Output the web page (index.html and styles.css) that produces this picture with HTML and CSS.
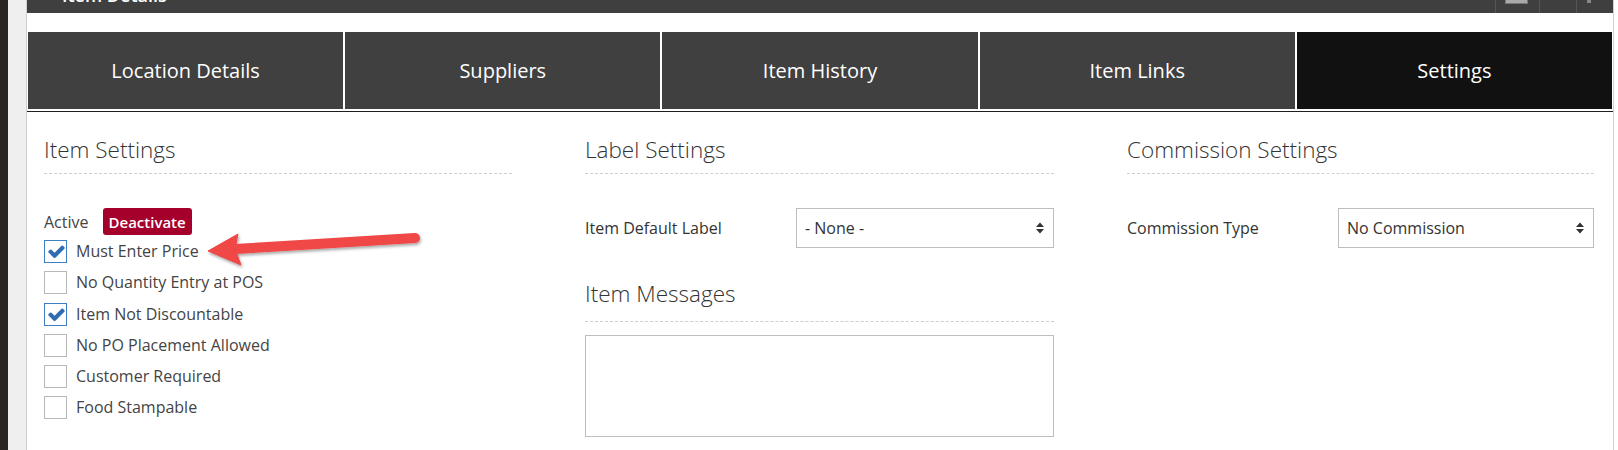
FILE: index.html
```html
<!DOCTYPE html>
<html lang="en">

<head>
    <meta charset="UTF-8">
    <meta name="viewport" content="width=device-width, initial-scale=1.0">
    <title>Item Details</title>
    <link rel="stylesheet" href="styles.css">
</head>

<body>
    <div class="page">
        <div class="edge"></div>
        <div class="gutter"></div>

        <div class="panel">
            <div class="topbar">
                <span class="topbar-title">Item Details</span>
                <div class="topbar-tools">
                    <div class="tool"><span class="tool-box"></span></div>
                    <div class="tool"></div>
                    <div class="tool"><span class="tool-dot"></span></div>
                </div>
            </div>

            <div class="tabs">
                <div class="tab">Location Details</div>
                <div class="tab">Suppliers</div>
                <div class="tab">Item History</div>
                <div class="tab">Item Links</div>
                <div class="tab active">Settings</div>
            </div>

            <div class="settings">
                <section class="col">
                    <h3 class="section-title">Item Settings</h3>
                    <div class="active-row">
                        <span>Active</span>
                        <button class="btn-deactivate">Deactivate</button>
                    </div>
                    <ul class="checks">
                        <li class="check-row">
                            <span class="check checked">
                                <svg viewBox="0 0 1792 1792"><path d="M1671 566q0 40-28 68l-724 724-136 136q-28 28-68 28t-68-28l-136-136-362-362q-28-28-28-68t28-68l136-136q28-28 68-28t68 28l294 295 656-657q28-28 68-28t68 28l136 136q28 28 28 68z" /></svg>
                            </span>
                            Must Enter Price
                        </li>
                        <li class="check-row"><span class="check"></span>No Quantity Entry at POS</li>
                        <li class="check-row">
                            <span class="check checked">
                                <svg viewBox="0 0 1792 1792"><path d="M1671 566q0 40-28 68l-724 724-136 136q-28 28-68 28t-68-28l-136-136-362-362q-28-28-28-68t28-68l136-136q28-28 68-28t68 28l294 295 656-657q28-28 68-28t68 28l136 136q28 28 28 68z" /></svg>
                            </span>
                            Item Not Discountable
                        </li>
                        <li class="check-row"><span class="check"></span>No PO Placement Allowed</li>
                        <li class="check-row"><span class="check"></span>Customer Required</li>
                        <li class="check-row"><span class="check"></span>Food Stampable</li>
                    </ul>
                </section>

                <section class="col">
                    <h3 class="section-title">Label Settings</h3>
                    <div class="form-row">
                        <label>Item Default Label</label>
                        <div class="select">
                            <span>- None -</span>
                            <svg class="select-arrows" viewBox="0 0 8 12"><path d="M0 5 L4 0.5 L8 5 Z M0 7 L8 7 L4 11.5 Z" /></svg>
                        </div>
                    </div>
                    <h3 class="section-title spaced">Item Messages</h3>
                    <textarea class="messages"></textarea>
                </section>

                <section class="col">
                    <h3 class="section-title">Commission Settings</h3>
                    <div class="form-row">
                        <label>Commission Type</label>
                        <div class="select">
                            <span>No Commission</span>
                            <svg class="select-arrows" viewBox="0 0 8 12"><path d="M0 5 L4 0.5 L8 5 Z M0 7 L8 7 L4 11.5 Z" /></svg>
                        </div>
                    </div>
                </section>
            </div>

            <!-- callout arrow pointing at "Must Enter Price" -->
            <svg class="callout-arrow" viewBox="0 0 240 56">
                <defs>
                    <filter id="arrowShadow" x="-10%" y="-30%" width="120%" height="180%">
                        <feDropShadow dx="1" dy="2" stdDeviation="1.6" flood-color="#000" flood-opacity="0.35" />
                    </filter>
                </defs>
                <g filter="url(#arrowShadow)" fill="#f04646" stroke="#f04646">
                    <line x1="40" y1="29" x2="220" y2="18" stroke-width="10" stroke-linecap="round" />
                    <path d="M13 31 L43 14 L40 29 L46 45 Z" stroke-width="1" stroke-linejoin="round" />
                </g>
            </svg>
        </div>
    </div>
</body>

</html>
```

FILE: styles.css
```css
body {
    margin: 0;
    font-family: "Open Sans", "Liberation Sans", sans-serif;
    background: #fff;
    color: #333;
    overflow: hidden;
}

.page {
    display: flex;
    height: 100vh;
}

.edge {
    width: 8px;
    background: #2a2522;
}

.gutter {
    width: 18px;
    background: #efefef;
}

.panel {
    position: relative;
    width: 1586px;
    background: #fff;
    border-left: 1px solid #cfcfcf;
    border-right: 1px solid #d2d2d2;
}

/* dark window bar, mostly scrolled off */
.topbar {
    display: flex;
    height: 13px;
    background: #3f3f3f;
    overflow: hidden;
}

.topbar-title {
    margin: -14px 0 0 35px;
    font-size: 18px;
    font-weight: 600;
    line-height: 18px;
    color: #fff;
}

.topbar-tools {
    display: flex;
    margin-left: auto;
}

.tool {
    border-left: 1px solid #555;
    width: 36px;
}

.tool:first-child {
    width: 43px;
}

.tool-box {
    display: block;
    width: 21px;
    height: 3px;
    margin-left: 9px;
    background: #a9a9a9;
    border: 1px solid #777;
    border-top: 0;
}

.tool-dot {
    display: block;
    width: 4px;
    height: 3px;
    margin-left: 10px;
    background: #888;
}

.tabs {
    display: grid;
    grid-template-columns: repeat(5, 1fr);
    gap: 2px;
    margin-top: 19px;
    padding: 0 1px 2px;
    border-bottom: 1px solid #1e1e1e;
}

.tab {
    display: flex;
    align-items: center;
    justify-content: center;
    height: 77px;
    background: #404040;
    color: #fff;
    font-size: 20px;
}

.tab.active {
    background: #111;
}

.settings {
    display: grid;
    grid-template-columns: 468px 469px 467px;
    column-gap: 73px;
    padding: 26px 0 0 17px;
}

.section-title {
    margin: 0;
    padding-bottom: 11px;
    border-bottom: 1px dashed #cfcfcf;
    font-size: 22.5px;
    font-weight: 300;
    line-height: 24px;
    color: #333;
}

.section-title.spaced {
    margin-top: 34px;
    padding-bottom: 15px;
}

.active-row {
    display: flex;
    align-items: center;
    gap: 14px;
    height: 27px;
    margin-top: 34px;
    font-size: 16px;
    color: #444;
}

.btn-deactivate {
    height: 27px;
    padding: 0 6px;
    border: 0;
    border-radius: 3px;
    background: #a5002b;
    color: #fff;
    font-family: inherit;
    font-size: 15px;
    font-weight: 600;
}

.checks {
    display: flex;
    flex-direction: column;
    gap: 8.3px;
    margin: 5px 0 0;
    padding: 0;
    list-style: none;
}

.check-row {
    display: flex;
    align-items: center;
    gap: 9px;
    height: 23px;
    font-size: 16px;
    line-height: 23px;
    color: #444;
}

.check {
    width: 21px;
    height: 21px;
    border: 1px solid #b8b8b8;
    background: #fff;
}

.check.checked {
    border-color: #3d7ec4;
}

.check svg {
    display: block;
    width: 19px;
    height: 19px;
    margin: 1px 0 0 2px;
    fill: #2f6db3;
}

.form-row {
    display: flex;
    align-items: center;
    margin-top: 34px;
    font-size: 16px;
}

.form-row label {
    width: 211px;
    color: #333;
}

.select {
    display: flex;
    align-items: center;
    justify-content: space-between;
    flex: 1;
    height: 38px;
    padding: 0 9px 0 8px;
    border: 1px solid #bdbdbd;
    color: #333;
}

.select-arrows {
    width: 8px;
    height: 12px;
    fill: #333;
}

.messages {
    display: block;
    box-sizing: border-box;
    width: 100%;
    height: 102px;
    margin-top: 13px;
    border: 1px solid #bdbdbd;
    resize: none;
}

.callout-arrow {
    position: absolute;
    left: 168px;
    top: 220px;
    width: 240px;
    height: 56px;
}
```
